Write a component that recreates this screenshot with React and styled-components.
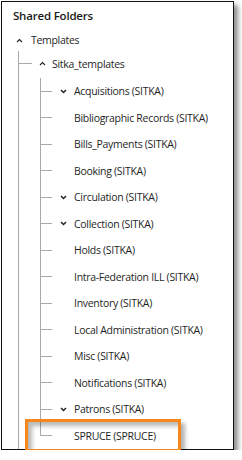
import React from "react";
import styled, { createGlobalStyle } from "styled-components";

const GlobalStyle = createGlobalStyle`
  html, body {
    margin: 0;
    padding: 0;
    background: #fff;
  }
  body {
    font-family: "Open Sans", "Noto Sans", sans-serif;
    color: #1f1f1f;
  }
`;

const LINE = "#a9a9a9";

const templates = [
  { name: "Acquisitions (SITKA)", open: true },
  { name: "Bibliographic Records (SITKA)" },
  { name: "Bills_Payments (SITKA)" },
  { name: "Booking (SITKA)" },
  { name: "Circulation (SITKA)", open: true },
  { name: "Collection (SITKA)", open: true },
  { name: "Holds (SITKA)" },
  { name: "Intra-Federation ILL (SITKA)" },
  { name: "Inventory (SITKA)" },
  { name: "Local Administration (SITKA)" },
  { name: "Misc (SITKA)" },
  { name: "Notifications (SITKA)" },
  { name: "Patrons (SITKA)", open: true },
  { name: "SPRUCE (SPRUCE)" },
];

const Chevron = ({ up }) => (
  <svg width="7" height="5" viewBox="0 0 7 5">
    <path
      d={up ? "M1 4 L3.5 1.5 L6 4" : "M1 1 L3.5 3.5 L6 1"}
      fill="none"
      stroke="#222"
      strokeWidth={up ? 1.1 : 1.5}
    />
  </svg>
);

const TreeNode = ({ name, open, last }) => (
  <LeafRow>
    <Elbow $last={last} />
    <Toggle>{open && <Chevron />}</Toggle>
    <Label>{name}</Label>
  </LeafRow>
);

const App = () => {
  return (
    <>
      <GlobalStyle />
      <Frame>
        <Heading>Shared Folders</Heading>
        <RootRow>
          <RootToggle>
            <Chevron up />
          </RootToggle>
          <Label>Templates</Label>
        </RootRow>
        <RootGroup>
          <BranchRow>
            <Stub />
            <BranchToggle>
              <Chevron up />
            </BranchToggle>
            <Label>Sitka_templates</Label>
          </BranchRow>
          <LeafGroup>
            {templates.map((t, i) => (
              <TreeNode
                key={t.name}
                name={t.name}
                open={t.open}
                last={i === templates.length - 1}
              />
            ))}
          </LeafGroup>
        </RootGroup>
        <Highlight />
      </Frame>
    </>
  );
};

const Frame = styled.div`
  position: relative;
  box-sizing: border-box;
  margin: 1px 0 0 1px;
  width: 233px;
  height: 449px;
  border: 1px solid #111;
  background: #fff;
  box-shadow: 4px 4px 5px rgba(0, 0, 0, 0.45);
  display: flex;
  flex-direction: column;
`;

const Heading = styled.div`
  height: 28px;
  padding-left: 11px;
  display: flex;
  align-items: center;
  font-size: 11.5px;
  letter-spacing: -0.2px;
  font-weight: 600;
  color: #1a1a1a;
`;

const Label = styled.span`
  font-size: 10.5px;
  letter-spacing: -0.3px;
  white-space: nowrap;
  color: #1f1f1f;
`;

const RootRow = styled.div`
  height: 22px;
  margin-top: 1px;
  padding-left: 12px;
  display: flex;
  align-items: center;
`;

const RootToggle = styled.span`
  width: 10px;
  margin-right: 7px;
  display: flex;
  justify-content: center;
`;

const RootGroup = styled.div`
  flex: 1;
  margin-left: 16px;
  border-left: 1px solid ${LINE};
  display: flex;
  flex-direction: column;
`;

const BranchRow = styled.div`
  height: 25px;
  display: flex;
  align-items: center;
`;

const Stub = styled.span`
  width: 13px;
  height: 1px;
  background: ${LINE};
`;

const BranchToggle = styled.span`
  width: 20px;
  display: flex;
  justify-content: center;
`;

const LeafGroup = styled.div`
  margin: 2px 0 0 21px;
  display: flex;
  flex-direction: column;
`;

const LeafRow = styled.div`
  height: 26.5px;
  display: flex;
  align-items: center;
`;

const Elbow = styled.span`
  align-self: stretch;
  width: 12px;
  background:
    linear-gradient(${LINE}, ${LINE}) left top / 1px ${({ $last }) => ($last ? "50%" : "100%")} no-repeat,
    linear-gradient(${LINE}, ${LINE}) left center / 100% 1px no-repeat;
`;

const Toggle = styled.span`
  width: 22px;
  display: flex;
  justify-content: center;
`;

const Highlight = styled.div`
  position: absolute;
  left: 23px;
  top: 417px;
  width: 156px;
  height: 33px;
  box-sizing: border-box;
  border: 3px solid #f7861c;
  box-shadow:
    inset 4px 4px 4px rgba(0, 0, 0, 0.28),
    4px 4px 4px rgba(0, 0, 0, 0.3);
  pointer-events: none;
`;

export default App;
